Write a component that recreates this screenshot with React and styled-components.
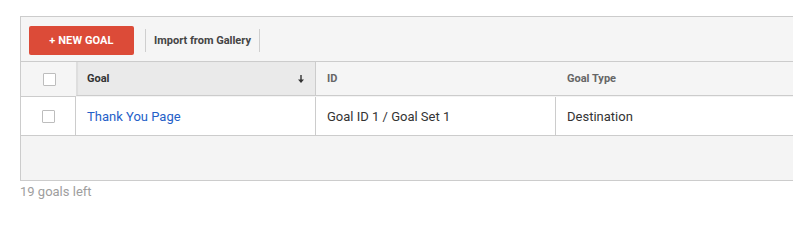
import React from "react";
import styled, { createGlobalStyle } from "styled-components";

const GlobalStyle = createGlobalStyle`
  html, body {
    margin: 0;
    padding: 0;
    background: #fff;
    font-family: Roboto, "Liberation Sans", Arial, sans-serif;
    overflow: hidden;
  }
`;

const Page = styled.div`
  padding: 16px 0 0 20px;
  overflow: hidden;
  height: 204px;
  box-sizing: border-box;
`;

const Panel = styled.div`
  width: 800px;
  border: 1px solid #cccccc;
  border-right: none;
  background: #f4f4f4;
`;

const Toolbar = styled.div`
  display: flex;
  align-items: center;
  height: 44px;
  padding: 0 8px;
  border-bottom: 1px solid #cccccc;
  background: #f5f5f5;
`;

const PrimaryButton = styled.button`
  width: 105px;
  height: 29px;
  margin-top: 2px;
  border: none;
  border-radius: 2px;
  background: #dc4b38;
  color: #fff;
  font-family: Roboto, "Liberation Sans", Arial, sans-serif;
  font-size: 11px;
  font-weight: bold;
  letter-spacing: 0.1px;
  cursor: pointer;
`;

const Divider = styled.span`
  width: 1px;
  height: 23px;
  margin-top: 2px;
  background: #cfcfcf;
  margin-left: ${(p) => p.$left || 0}px;
`;

const TextButton = styled.span`
  padding: 0 8px;
  margin-top: 2px;
  color: #444;
  font-size: 11px;
  font-weight: bold;
`;

const Grid = styled.div`
  display: grid;
  grid-template-columns: 55px 240px 240px 1fr;
`;

const HeadCell = styled.div`
  height: 34px;
  display: flex;
  align-items: center;
  justify-content: space-between;
  padding: 0 11px 0 ${(p) => (p.$sorted ? 10 : 11)}px;
  box-sizing: border-box;
  border-bottom: 1px solid #cccccc;
  background: ${(p) => (p.$sorted ? "#eaeaea" : "#f5f5f5")};
  border-left: ${(p) => (p.$sorted ? "1px solid #dedede" : "none")};
  border-right: ${(p) => (p.$sorted ? "1px solid #cccccc" : "none")};
  box-shadow: ${(p) => (p.$sorted ? "inset 1px 0 1px rgba(0,0,0,0.06)" : "none")};
  color: ${(p) => (p.$sorted ? "#333" : "#666")};
  font-size: 11px;
  font-weight: bold;
`;

const CheckHead = styled.div`
  height: 34px;
  display: flex;
  align-items: center;
  justify-content: center;
  border-bottom: 1px solid #cccccc;
  background: #f5f5f5;
`;

const Cell = styled.div`
  height: 39px;
  display: flex;
  align-items: center;
  justify-content: ${(p) => (p.$center ? "center" : "flex-start")};
  padding: ${(p) => (p.$center ? "0" : "0 11px")};
  box-sizing: border-box;
  background: #fff;
  border-bottom: 1px solid #cccccc;
  border-right: ${(p) => (p.$last ? "none" : "1px solid #cccccc")};
  color: #333;
  font-size: 13px;
`;

const Checkbox = styled.span`
  width: 11px;
  height: 11px;
  border: 1px solid #bdbdbd;
  border-radius: 1px;
  background: #fff;
  margin-left: 1px;
`;

const GoalLink = styled.a`
  color: #2460c8;
  text-decoration: none;
  cursor: pointer;
`;

const EmptyArea = styled.div`
  height: 44px;
  background: #f4f4f4;
`;

const Footer = styled.div`
  padding-top: 3px;
  color: #9e9e9e;
  font-size: 13px;
`;

const SortArrow = () => (
  <svg width="6" height="8" viewBox="0 0 6 8">
    <rect x="2.3" y="0" width="1.4" height="5" fill="#333" />
    <path d="M0 4.5 L6 4.5 L3 8 Z" fill="#333" />
  </svg>
);

export default function App() {
  return (
    <>
      <GlobalStyle />
      <Page>
        <Panel>
          <Toolbar>
            <PrimaryButton>+ NEW GOAL</PrimaryButton>
            <Divider $left={11} />
            <TextButton>Import from Gallery</TextButton>
            <Divider />
          </Toolbar>
          <Grid>
            <CheckHead>
              <Checkbox />
            </CheckHead>
            <HeadCell $sorted>
              <span>Goal</span>
              <SortArrow />
            </HeadCell>
            <HeadCell>ID</HeadCell>
            <HeadCell>Goal Type</HeadCell>

            <Cell $center>
              <Checkbox />
            </Cell>
            <Cell>
              <GoalLink>Thank You Page</GoalLink>
            </Cell>
            <Cell>Goal ID 1 / Goal Set 1</Cell>
            <Cell $last>Destination</Cell>
          </Grid>
          <EmptyArea />
        </Panel>
        <Footer>19 goals left</Footer>
      </Page>
    </>
  );
}
